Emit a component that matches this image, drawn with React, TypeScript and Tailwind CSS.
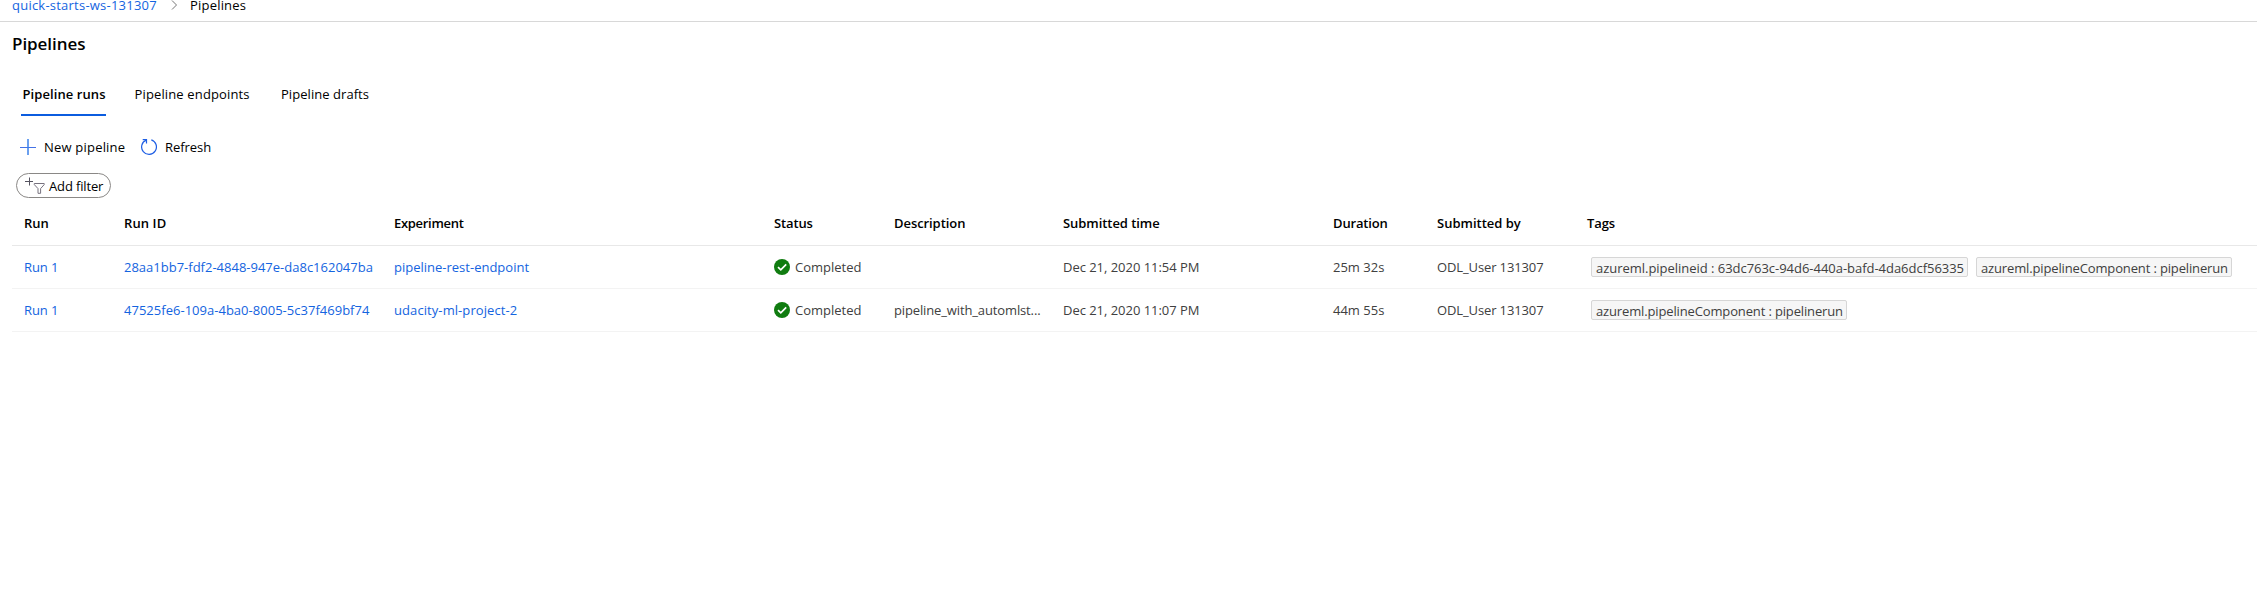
import type { ReactNode } from 'react';

function PlusIcon() {
  return (
    <svg width="16" height="16" viewBox="0 0 16 16" fill="none">
      <path d="M0 8.5H16" stroke="#4472e6" />
      <path d="M8 0V16" stroke="#3a80ea" strokeWidth="1.5" />
    </svg>
  );
}

function RefreshIcon() {
  return (
    <svg width="16" height="16" viewBox="0 0 16 16" fill="none" stroke="#1f5fe4" strokeWidth="1.2">
      <path d="M10.3 0.9A7.4 7.4 0 1 1 5.2 1.1" />
      <path d="M1.7 0.6H5.5V4.4" />
    </svg>
  );
}

function AddFilterIcon() {
  return (
    <svg width="20" height="17" viewBox="0 0 20 17" fill="none">
      <path d="M0 4.5H8M4.5 0.5V8.5" stroke="#55535f" />
      <path d="M9.3 6.5H19.2V7.6L15.6 11.6V16.3H13V11.6L9.3 7.6Z" stroke="#77727f" />
    </svg>
  );
}

function CompletedIcon() {
  return (
    <svg width="16" height="16" viewBox="0 0 16 16" fill="none" className="shrink-0">
      <circle cx="8" cy="8" r="8" fill="#107c10" />
      <path d="M4 8.2L6.8 10.9L12.2 5.4" stroke="#fff" strokeWidth="1.7" />
    </svg>
  );
}

function Tag({ children, className }: { children: string; className: string }) {
  return (
    <span className={`h-5 rounded-xs border border-[#d6d6d6] bg-[#f6f6f6] pl-1 leading-5 ${className}`}>{children}</span>
  );
}

const grid = 'grid grid-cols-[100px_270px_380px_120px_169px_270px_104px_150px_1fr] pl-3 items-center border-b';

function Row({
  id,
  experiment,
  description,
  time,
  duration,
  tags,
}: {
  id: ReactNode;
  experiment: ReactNode;
  description?: string;
  time: string;
  duration: string;
  tags: ReactNode;
}) {
  return (
    <div className={`${grid} h-[43px] border-[#f3f3f3] text-[#404040]`}>
      <a className="tracking-[-0.1px] text-[#1464e0]">Run 1</a>
      {id}
      {experiment}
      <div className="flex items-center gap-[5px]">
        <CompletedIcon />
        <span>Completed</span>
      </div>
      <span className="tracking-[-0.13px]">{description}</span>
      <span className="tracking-[-0.03px]">{time}</span>
      <span>{duration}</span>
      <span className="tracking-[-0.12px]">ODL_User 131307</span>
      <div className="flex gap-2 pl-1">{tags}</div>
    </div>
  );
}

export default function App() {
  return (
    <div className="h-[609px] w-full overflow-hidden whitespace-nowrap bg-white font-['Open_Sans',sans-serif] text-[13px] leading-5 text-black">
      <nav className="flex h-[22px] border-b border-[#d8d8d8] pl-3">
        <div className="-mt-[5px] flex h-5 items-center">
          <a className="w-[159px] tracking-[0.23px] text-[#1464e0]">quick-starts-ws-131307</a>
          <svg width="7" height="10" viewBox="0 0 7 10" fill="none" stroke="#777" className="mr-3">
            <path d="M1 0.5L5.5 5L1 9.5" />
          </svg>
          <span className="tracking-[0.2px]">Pipelines</span>
        </div>
      </nav>

      <h1 className="mt-2.5 pl-3 text-[17px] leading-6 font-semibold tracking-[-0.05px]">Pipelines</h1>

      <div className="mt-7 flex h-8 pl-[21px]">
        <div className="w-[85px] border-b-2 border-[#0b5cdf] pl-[1.5px] font-semibold tracking-[0.08px]">Pipeline runs</div>
        <div className="ml-7 w-[147px] pl-[0.5px] tracking-[0.14px]">Pipeline endpoints</div>
        <div className="tracking-[0.05px]">Pipeline drafts</div>
      </div>

      <div className="mt-[21px] flex items-center pl-5">
        <PlusIcon />
        <span className="ml-2 w-[97px] tracking-[0.2px]">New pipeline</span>
        <RefreshIcon />
        <span className="ml-2 tracking-[-0.05px]">Refresh</span>
      </div>

      <button className="mt-4 ml-4 flex h-[25px] w-[95px] rounded-full border border-[#8a8886] pl-2">
        <span className="mt-[3px]">
          <AddFilterIcon />
        </span>
        <span className="mt-0.5 ml-1 tracking-[-0.14px]">Add filter</span>
      </button>

      <div className="pl-3">
        <div className={`${grid} h-12 border-[#e8e8e8] pt-[3px] font-semibold`}>
          <span>Run</span>
          <span className="tracking-[0.1px]">Run ID</span>
          <span className="tracking-[-0.3px]">Experiment</span>
          <span className="tracking-[-0.13px]">Status</span>
          <span className="tracking-[-0.07px]">Description</span>
          <span className="tracking-[-0.06px]">Submitted time</span>
          <span className="tracking-[-0.15px]">Duration</span>
          <span>Submitted by</span>
          <span className="tracking-[-0.1px]">Tags</span>
        </div>
        <Row
          id={<a className="text-[#1464e0]">28aa1bb7-fdf2-4848-947e-da8c162047ba</a>}
          experiment={<a className="text-[#1464e0]">pipeline-rest-endpoint</a>}
          time="Dec 21, 2020 11:54 PM"
          duration="25m 32s"
          tags={
            <>
              <Tag className="w-[377px] tracking-[-0.03px]">azureml.pipelineid : 63dc763c-94d6-440a-bafd-4da6dcf56335</Tag>
              <Tag className="w-64 tracking-[-0.14px]">azureml.pipelineComponent : pipelinerun</Tag>
            </>
          }
        />
        <Row
          id={<a className="tracking-[0.02px] text-[#1464e0]">47525fe6-109a-4ba0-8005-5c37f469bf74</a>}
          experiment={<a className="tracking-[0.08px] text-[#1464e0]">udacity-ml-project-2</a>}
          description="pipeline_with_automlst..."
          time="Dec 21, 2020 11:07 PM"
          duration="44m 55s"
          tags={<Tag className="w-64 tracking-[-0.14px]">azureml.pipelineComponent : pipelinerun</Tag>}
        />
      </div>
    </div>
  );
}
